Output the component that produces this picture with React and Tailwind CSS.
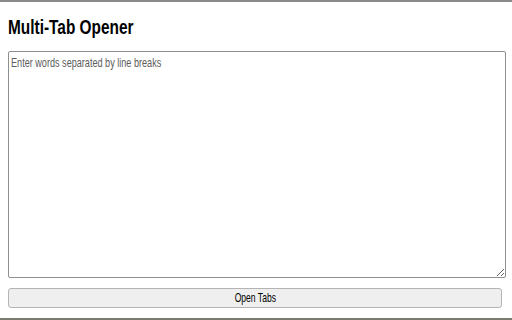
export default function App() {
  return (
    <div className="w-[512px] h-[320px] bg-white flex flex-col overflow-hidden" style={{ fontFamily: '"Liberation Sans", Arial, sans-serif' }}>
      <div className="h-[2px] bg-[#8a8a8a] shrink-0" />
      <div className="flex-1 flex flex-col px-2">
        <h1 className="mt-[14px] h-[22px] text-[20px] leading-[22px] font-bold text-black whitespace-nowrap">
          <span className="inline-block origin-left scale-x-[0.77]">Multi-Tab Opener</span>
        </h1>
        <div className="relative mt-[13px] w-[498px] h-[227px]">
          <textarea
            aria-label="Enter words separated by line breaks"
            className="block w-full h-full border border-[#8f8f8f] rounded-[2px] px-[2px] py-[2px] text-[13px] leading-[16px] text-black outline-none resize"
          />
          <span className="pointer-events-none absolute left-[3px] top-[4px] text-[13px] leading-[16px] text-[#5c5c5c] whitespace-nowrap origin-left scale-x-[0.70]">
            Enter words separated by line breaks
          </span>
        </div>
        <button className="mt-[10px] w-[494px] h-[20px] bg-[#efefef] border border-[#b4b4b4] rounded-[3px] text-[13px] leading-[18px] text-black whitespace-nowrap">
          <span className="inline-block origin-center scale-x-[0.66]">Open Tabs</span>
        </button>
      </div>
      <div className="h-[2px] bg-[#7a7a70] shrink-0" />
    </div>
  );
}
